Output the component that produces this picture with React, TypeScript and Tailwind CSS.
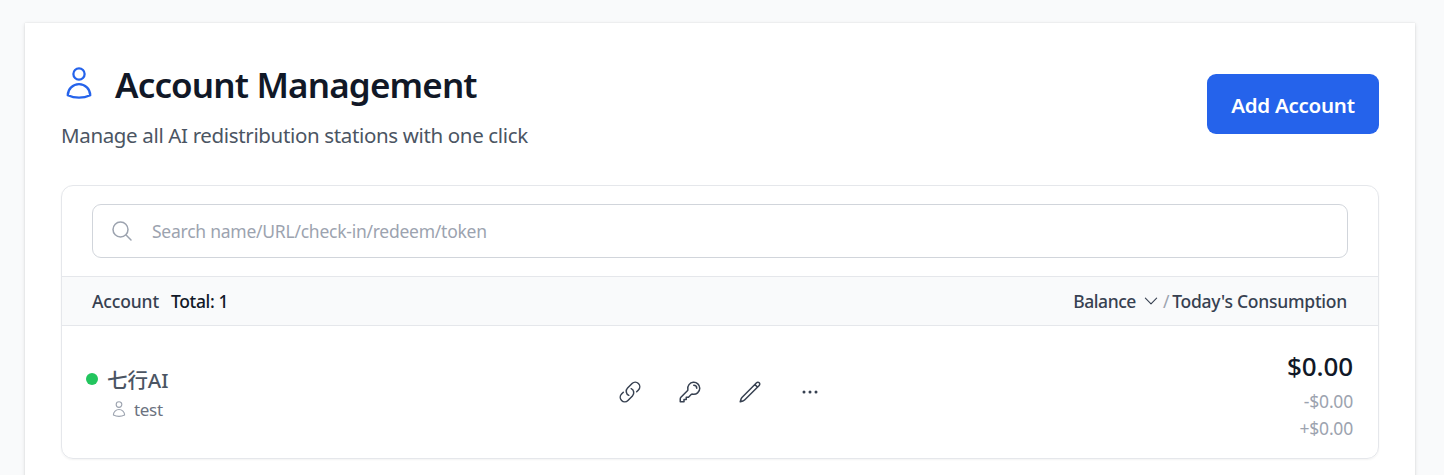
import {
  HiOutlineUser,
  HiOutlineMagnifyingGlass,
  HiOutlineChevronDown,
  HiOutlineLink,
  HiOutlineKey,
  HiOutlinePencil,
  HiOutlineEllipsisHorizontal,
} from "react-icons/hi2";

const actions = [
  { label: "Copy link", Icon: HiOutlineLink },
  { label: "Keys", Icon: HiOutlineKey },
  { label: "Edit", Icon: HiOutlinePencil },
  { label: "More", Icon: HiOutlineEllipsisHorizontal },
];

function PageHeader() {
  return (
    <header className="flex items-start justify-between">
      <div>
        <div className="flex h-[54px] items-center gap-[18px]">
          <HiOutlineUser className="mb-1.5 size-9 text-[#2563eb]" />
          <h1 className="-mt-0.5 text-[35px] leading-[54px] font-[560] tracking-[-0.85px] whitespace-nowrap text-[#111827]">
            Account Management
          </h1>
        </div>
        <p className="mt-[7px] text-[20.5px] leading-[30px] tracking-[-0.35px] whitespace-nowrap text-[#4b5563]">
          Manage all AI redistribution stations with one click
        </p>
      </div>
      <button className="mt-[15px] flex h-[60px] w-[172px] items-center justify-center rounded-[9px] bg-[#2563eb] pt-0.5 text-[20.5px] font-semibold tracking-[-0.25px] whitespace-nowrap text-white">
        Add Account
      </button>
    </header>
  );
}

function SearchBar() {
  return (
    <div className="px-[30px] py-[18px]">
      <label className="flex h-[54px] items-center gap-[18px] rounded-[9px] border border-[#d1d5db] pr-4 pl-[17px]">
        <HiOutlineMagnifyingGlass className="size-6 shrink-0 text-[#9ca3af]" />
        <input
          type="text"
          placeholder="Search name/URL/check-in/redeem/token"
          className="w-full bg-transparent text-[17.5px] tracking-[-0.25px] outline-none placeholder:text-[#9ca3af]"
        />
      </label>
    </div>
  );
}

function ListHeader() {
  return (
    <div className="flex h-[50px] items-center justify-between border-y border-[#e5e7eb] bg-[#f9fafb] pr-[31px] pl-[30px] text-[17.5px] font-[550] tracking-[-0.25px] whitespace-nowrap text-[#374151]">
      <div className="flex gap-3">
        <span className="tracking-[-0.15px]">Account</span>
        <span className="tracking-[-0.35px] text-[#111827]">Total: 1</span>
      </div>
      <div className="flex items-center">
        <span className="tracking-[-0.45px]">Balance</span>
        <HiOutlineChevronDown className="ml-1.5 size-[18px]" />
        <span className="ml-[3px] font-normal text-[#9ca3af]">/</span>
        <span className="ml-[3px]">Today's Consumption</span>
      </div>
    </div>
  );
}

function AccountRow() {
  return (
    <div className="grid h-[132px] grid-cols-[1fr_auto_1fr] items-center pr-[25px] pl-6">
      <div className="flex gap-[9px] pt-0.5">
        <span className="mt-[9px] size-3 rounded-full bg-[#22c55e]" />
        <div>
          <div className="text-[20.5px] leading-[33px] font-medium tracking-[-0.1px] text-[#4b5563]">七行AI</div>
          <div className="flex items-center gap-[6px] pl-[3px] leading-[26px] text-[#6b7280]">
            <HiOutlineUser className="-mt-0.5 size-[18px] text-[#9ca3af]" />
            <span className="text-[17px] tracking-[-0.3px]">test</span>
          </div>
        </div>
      </div>
      <div className="flex gap-9">
        {actions.map(({ label, Icon }) => (
          <button key={label} aria-label={label} className="text-[#374151]">
            <Icon className="size-6" />
          </button>
        ))}
      </div>
      <div className="flex flex-col items-end pt-[2px] whitespace-nowrap">
        <div className="mb-px text-[26px] leading-[42px] font-[550] tracking-[-0.1px] text-[#111827]">$0.00</div>
        <div className="text-[17.5px] leading-[27px] tracking-[-0.2px] text-[#9ca3af]">-$0.00</div>
        <div className="text-[17.5px] leading-[27px] tracking-[-0.2px] text-[#9ca3af]">+$0.00</div>
      </div>
    </div>
  );
}

export default function App() {
  return (
    <div className="h-[475px] overflow-hidden bg-[#f9fafb] px-[25px] pt-[23px] font-['Noto_Sans','Noto_Sans_CJK_SC',sans-serif]">
      <main className="h-[520px] w-[1390px] bg-white px-9 pt-9 shadow-[0_1px_4px_rgba(0,0,0,0.12),0_0_1px_rgba(0,0,0,0.12)]">
        <PageHeader />
        <section className="mt-[35px] overflow-hidden rounded-xl border border-[#e5e7eb] shadow-xs">
          <SearchBar />
          <ListHeader />
          <AccountRow />
        </section>
      </main>
    </div>
  );
}
